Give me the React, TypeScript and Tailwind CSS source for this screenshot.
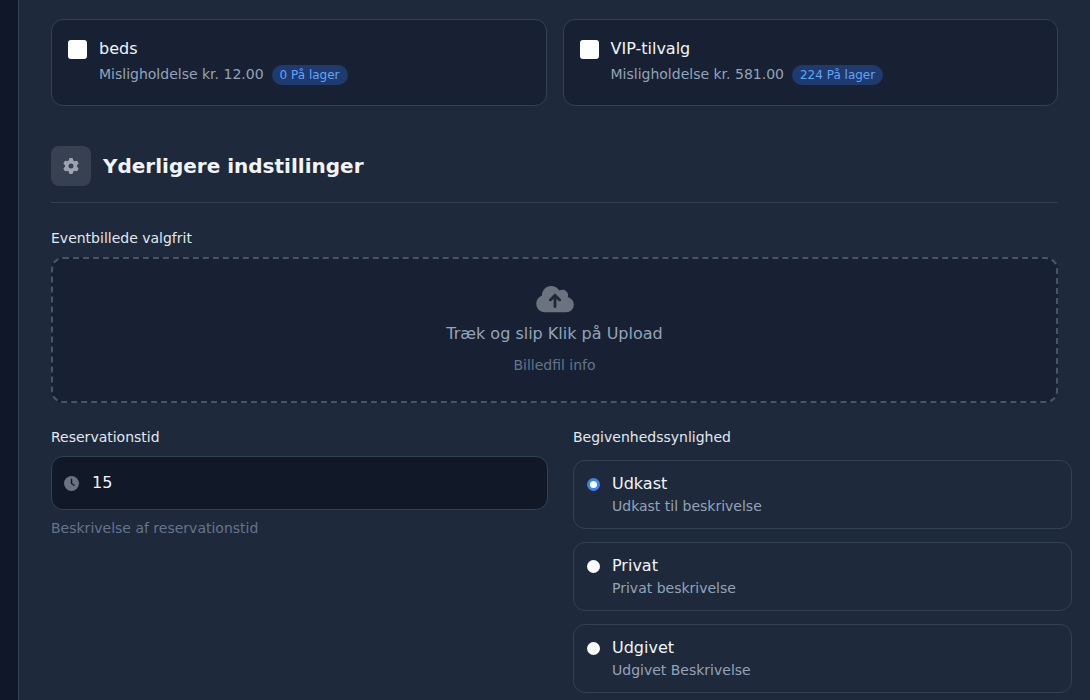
import React from 'react';

const font = { fontFamily: '"DejaVu Sans", sans-serif' };

const Gear = () => (
  <svg width="16" height="16" viewBox="0 0 512 512" fill="#9ca3af">
    <path d="M495.9 166.6c3.2 8.7.5 18.4-6.4 24.6l-43.3 39.4c1.1 8.3 1.7 16.8 1.7 25.4s-.6 17.1-1.7 25.4l43.3 39.4c6.9 6.2 9.6 15.9 6.4 24.6-4.4 11.9-9.7 23.3-15.8 34.3l-4.7 8.1c-6.6 11-14 21.4-22.1 31.2-5.9 7.2-15.7 9.6-24.5 6.8l-55.7-17.7c-13.4 10.3-28.2 18.9-44 25.4l-12.5 57.1c-2 9.1-9 16.3-18.2 17.8-13.8 2.3-28 3.5-42.5 3.5s-28.7-1.2-42.5-3.5c-9.2-1.5-16.2-8.7-18.2-17.8l-12.5-57.1c-15.8-6.5-30.6-15.1-44-25.4l-55.6 17.8c-8.8 2.8-18.6.3-24.5-6.8-8.1-9.8-15.5-20.2-22.1-31.2l-4.7-8.1c-6.1-11-11.4-22.4-15.8-34.3-3.2-8.7-.5-18.4 6.4-24.6l43.3-39.4c-1.1-8.4-1.7-16.9-1.7-25.5s.6-17.1 1.7-25.4l-43.3-39.4c-6.9-6.2-9.6-15.9-6.4-24.6 4.4-11.9 9.7-23.3 15.8-34.3l4.7-8.1c6.6-11 14-21.4 22.1-31.2 5.9-7.2 15.7-9.6 24.5-6.8l55.7 17.7c13.4-10.3 28.2-18.9 44-25.4l12.5-57.1c2-9.1 9-16.3 18.2-17.8C227.3 1.2 241.5 0 256 0s28.7 1.2 42.5 3.5c9.2 1.5 16.2 8.7 18.2 17.8l12.5 57.1c15.8 6.5 30.6 15.1 44 25.4l55.7-17.7c8.8-2.8 18.6-.3 24.5 6.8 8.1 9.8 15.5 20.2 22.1 31.2l4.7 8.1c6.1 11 11.4 22.4 15.8 34.3zM256 336a80 80 0 1 0 0-160 80 80 0 1 0 0 160z" />
  </svg>
);

const Cloud = () => (
  <svg width="38" height="30" viewBox="0 0 640 512">
    <path fill="#6b7280" d="M144 480C64.5 480 0 415.5 0 336c0-62.8 40.2-116.2 96.2-135.9-.1-2.7-.2-5.4-.2-8.1 0-88.4 71.6-160 160-160 59.3 0 111 32.2 138.7 80.2C409.9 102 428.3 96 448 96c53 0 96 43 96 96 0 12.2-2.3 23.8-6.4 34.6C596 238.4 640 290.1 640 352c0 70.7-57.3 128-128 128H144z" />
    <path fill="#1f2937" d="M337 175c-9.4-9.4-24.6-9.4-33.9 0l-80 80c-9.4 9.4-9.4 24.6 0 33.9s24.6 9.4 33.9 0l39-39V384c0 13.3 10.7 24 24 24s24-10.7 24-24V249.9l39 39c9.4 9.4 24.6 9.4 33.9 0s9.4-24.6 0-33.9l-80-80z" />
  </svg>
);

const ClockIcon = () => (
  <svg width="15" height="15" viewBox="0 0 512 512">
    <circle cx="256" cy="256" r="256" fill="#6b7280" />
    <path d="M256 110v146l90 60" stroke="#111827" strokeWidth="48" strokeLinecap="round" strokeLinejoin="round" fill="none" />
  </svg>
);

const AddonCard = ({ name, price, stock }: { name: string; price: string; stock: string }) => (
  <div className="flex gap-3 rounded-xl border border-[#334155] bg-[#172133] px-4 pt-[19px] h-[87px]">
    <div className="mt-[1px] h-[19px] w-[19px] rounded-[3px] bg-white shrink-0" />
    <div className="flex flex-col">
      <span className="text-[16px] text-[#f1f5f9] leading-[19px]">{name}</span>
      <div className="mt-[6px] flex items-center gap-2">
        <span className="text-[14px] text-[#94a3b8]">{price}</span>
        <span className="rounded-full bg-[#1e3a6e] px-2 py-[1px] text-[12px] text-[#60a5fa]">{stock}</span>
      </div>
    </div>
  </div>
);

const Radio = ({ title, desc, checked }: { title: string; desc: string; checked?: boolean }) => (
  <div className="flex gap-3 rounded-xl border border-[#334155] px-[13px] pt-[13px] h-[69px]">
    {checked ? (
      <div className="mt-[4px] h-[13px] w-[13px] rounded-full border-[3px] border-[#3b82f6] bg-white shrink-0" />
    ) : (
      <div className="mt-[4px] h-[13px] w-[13px] rounded-full bg-white shrink-0" />
    )}
    <div className="flex flex-col">
      <span className="text-[16px] text-[#f1f5f9] leading-[20px]">{title}</span>
      <span className="mt-[2px] text-[14px] text-[#94a3b8]">{desc}</span>
    </div>
  </div>
);

export default function App() {
  return (
    <div className="flex h-[700px] w-[1090px] overflow-hidden bg-[#1e293b]" style={font}>
      <div className="w-[19px] shrink-0 border-r border-[#334155] bg-[#0f1729]" />
      <main className="flex-1 pl-[32px] pr-[18px] pt-[19px]">
        <div className="mr-[14px] grid grid-cols-2 gap-4">
          <AddonCard name="beds" price="Misligholdelse kr. 12.00" stock="0 På lager" />
          <AddonCard name="VIP-tilvalg" price="Misligholdelse kr. 581.00" stock="224 På lager" />
        </div>

        <div className="mr-[14px] mt-[40px] flex items-center gap-3 border-b border-[#334155] pb-[16px]">
          <div className="flex h-[40px] w-[40px] items-center justify-center rounded-lg bg-[#374151]">
            <Gear />
          </div>
          <h2 className="text-[20px] font-bold text-[#f1f5f9]">Yderligere indstillinger</h2>
        </div>

        <div className="mt-[25px] text-[14px] text-[#e2e8f0]">Eventbillede valgfrit</div>
        <div className="mr-[14px] mt-[8px] flex h-[146px] flex-col items-center justify-center rounded-xl border-2 border-dashed border-[#475569] bg-[#172133]">
          <Cloud />
          <span className="mt-[8px] text-[16px] text-[#94a3b8]">Træk og slip Klik på Upload</span>
          <span className="mt-[9px] text-[14px] text-[#64748b]">Billedfil info</span>
        </div>

        <div className="mt-[24px] grid grid-cols-[497px_1fr] gap-[25px]">
          <div>
            <div className="text-[14px] text-[#e2e8f0]">Reservationstid</div>
            <div className="mt-[8px] flex h-[54px] items-center gap-[13px] rounded-xl border border-[#334155] bg-[#111827] px-3">
              <ClockIcon />
              <span className="text-[16px] text-[#f1f5f9]">15</span>
            </div>
            <div className="mt-[8px] text-[14px] text-[#64748b]">Beskrivelse af reservationstid</div>
          </div>
          <div>
            <div className="text-[14px] text-[#e2e8f0]">Begivenhedssynlighed</div>
            <div className="mt-[12px] flex flex-col gap-[13px]">
              <Radio title="Udkast" desc="Udkast til beskrivelse" checked />
              <Radio title="Privat" desc="Privat beskrivelse" />
              <Radio title="Udgivet" desc="Udgivet Beskrivelse" />
            </div>
          </div>
        </div>
      </main>
    </div>
  );
}
